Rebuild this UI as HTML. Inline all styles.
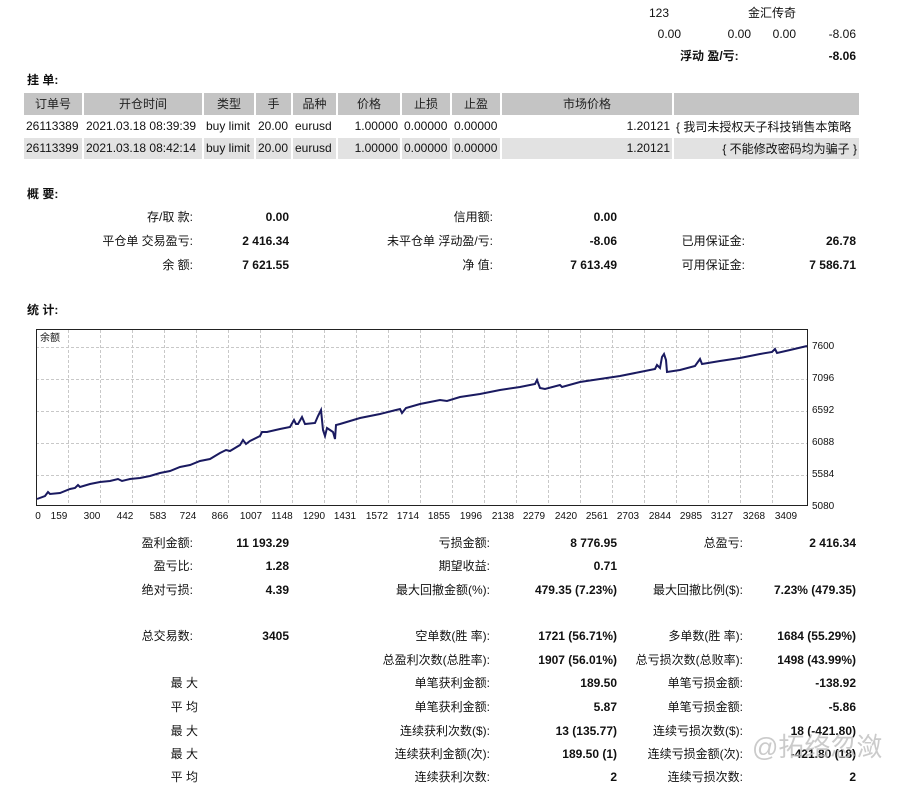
<!DOCTYPE html>
<html><head><meta charset="utf-8"><style>
body{margin:0;width:917px;height:795px;background:#fff;font-family:"Liberation Sans","Noto Sans CJK SC",sans-serif;font-size:12px;color:#111;position:relative;overflow:hidden}
.a{position:absolute;white-space:nowrap;line-height:14px}
.b{font-weight:bold}
table{position:absolute;left:24px;top:93px;border-collapse:collapse;font-size:12px;table-layout:fixed;width:835px}
td{height:22px;padding:0 2px;white-space:nowrap;overflow:hidden;border-right:2px solid #fff;border-bottom:1px solid #fff;box-sizing:border-box}
tr.h td{background:#c4c4c4;text-align:center;color:#222}
tr.g td{background:#e2e2e2}
.rt{text-align:right}
</style></head><body>
<div class="a" style="right:248px;top:6px">123</div>
<div class="a" style="left:748px;top:6px">金汇传奇</div>
<div class="a" style="right:236px;top:27px">0.00</div>
<div class="a" style="right:166px;top:27px">0.00</div>
<div class="a" style="right:121px;top:27px">0.00</div>
<div class="a" style="right:61px;top:27px">-8.06</div>
<div class="a b" style="left:680px;top:49px">浮动 盈/亏:</div>
<div class="a b" style="right:61px;top:49px">-8.06</div>

<div class="a b" style="left:27px;top:73px">挂 单:</div>
<table>
<colgroup><col style="width:59px"><col style="width:120px"><col style="width:52px"><col style="width:37px"><col style="width:45px"><col style="width:64px"><col style="width:50px"><col style="width:50px"><col style="width:172px"><col style="width:186px"></colgroup>
<tr class="h"><td>订单号</td><td>开仓时间</td><td>类型</td><td>手</td><td>品种</td><td>价格</td><td>止损</td><td>止盈</td><td>市场价格</td><td style="border-right:0"></td></tr>
<tr><td>26113389</td><td>2021.03.18 08:39:39</td><td>buy limit</td><td>20.00</td><td>eurusd</td><td class="rt">1.00000</td><td>0.00000</td><td>0.00000</td><td class="rt">1.20121</td><td style="border-right:0">{ 我司未授权天子科技销售本策略</td></tr>
<tr class="g"><td>26113399</td><td>2021.03.18 08:42:14</td><td>buy limit</td><td>20.00</td><td>eurusd</td><td class="rt">1.00000</td><td>0.00000</td><td>0.00000</td><td class="rt">1.20121</td><td class="rt" style="border-right:0">{ 不能修改密码均为骗子 }</td></tr>
</table>

<div class="a b" style="left:27px;top:187px">概 要:</div>
<div class="a" style="right:724px;top:210px">存/取 款:</div><div class="a b" style="right:628px;top:210px">0.00</div>
<div class="a" style="right:424px;top:210px">信用额:</div><div class="a b" style="right:300px;top:210px">0.00</div>
<div class="a" style="right:724px;top:234px">平仓单 交易盈亏:</div><div class="a b" style="right:628px;top:234px">2 416.34</div>
<div class="a" style="right:424px;top:234px">未平仓单 浮动盈/亏:</div><div class="a b" style="right:300px;top:234px">-8.06</div>
<div class="a" style="right:172px;top:234px">已用保证金:</div><div class="a b" style="right:61px;top:234px">26.78</div>
<div class="a" style="right:724px;top:258px">余 额:</div><div class="a b" style="right:628px;top:258px">7 621.55</div>
<div class="a" style="right:424px;top:258px">净 值:</div><div class="a b" style="right:300px;top:258px">7 613.49</div>
<div class="a" style="right:172px;top:258px">可用保证金:</div><div class="a b" style="right:61px;top:258px">7 586.71</div>

<div class="a b" style="left:27px;top:303px">统 计:</div>

<svg style="position:absolute;left:0;top:0" width="917" height="795">
<g stroke="#c8c8c8" stroke-dasharray="3,2" stroke-width="1">
<line x1="36" y1="347.5" x2="807" y2="347.5"/><line x1="36" y1="379.5" x2="807" y2="379.5"/><line x1="36" y1="411.5" x2="807" y2="411.5"/><line x1="36" y1="443.5" x2="807" y2="443.5"/><line x1="36" y1="475.5" x2="807" y2="475.5"/>
<line x1="68.5" y1="330" x2="68.5" y2="505"/><line x1="100.5" y1="330" x2="100.5" y2="505"/><line x1="132.5" y1="330" x2="132.5" y2="505"/><line x1="164.5" y1="330" x2="164.5" y2="505"/><line x1="196.5" y1="330" x2="196.5" y2="505"/><line x1="228.5" y1="330" x2="228.5" y2="505"/><line x1="260.5" y1="330" x2="260.5" y2="505"/><line x1="292.5" y1="330" x2="292.5" y2="505"/><line x1="324.5" y1="330" x2="324.5" y2="505"/><line x1="356.5" y1="330" x2="356.5" y2="505"/><line x1="388.5" y1="330" x2="388.5" y2="505"/><line x1="420.5" y1="330" x2="420.5" y2="505"/><line x1="452.5" y1="330" x2="452.5" y2="505"/><line x1="484.5" y1="330" x2="484.5" y2="505"/><line x1="516.5" y1="330" x2="516.5" y2="505"/><line x1="548.5" y1="330" x2="548.5" y2="505"/><line x1="580.5" y1="330" x2="580.5" y2="505"/><line x1="612.5" y1="330" x2="612.5" y2="505"/><line x1="644.5" y1="330" x2="644.5" y2="505"/><line x1="676.5" y1="330" x2="676.5" y2="505"/><line x1="708.5" y1="330" x2="708.5" y2="505"/><line x1="740.5" y1="330" x2="740.5" y2="505"/><line x1="772.5" y1="330" x2="772.5" y2="505"/>
</g>
<rect x="36.5" y="329.5" width="771" height="176" fill="none" stroke="#222" stroke-width="1"/>
<polyline fill="none" stroke="#1a1a60" stroke-width="2" points="37,499 45,496 48,492 50,494 60,493 70,489 75,488 78,485 80,487 90,484 100,482 110,481 118,479 122,481 130,479 140,478 150,476 160,473 170,471 180,467 190,465 200,461 210,459 220,453 226,450 230,451 240,445 243,440 246,444 250,441 260,436 262,432 267,432 280,429 290,427 294,420 296,424 298,424 302,417 305,424 315,423 318,416 321,410 323,430 325,436 327,428 330,430 333,432 335,439 336,425 340,424 360,418 380,414 396,410 400,409 402,413 406,408 420,404 440,400 447,401 460,397 480,394 500,390 520,387 535,384 537,380 540,388 545,389 560,385 562,387 580,382 600,379 620,376 640,372 655,369 657,365 660,368 662,357 664,354 666,360 667,372 680,370 695,366 700,359 702,364 720,361 740,358 760,354 772,352 775,349 777,353 790,350 807,346"/>
<g font-family="Liberation Sans,sans-serif" font-size="10" fill="#111">
<text x="40" y="341">余额</text>
<text x="812" y="349">7600</text><text x="812" y="381">7096</text><text x="812" y="413">6592</text><text x="812" y="445">6088</text><text x="812" y="477">5584</text><text x="812" y="509">5080</text>
<g text-anchor="middle">
<text x="38" y="519">0</text><text x="59" y="519">159</text><text x="92" y="519">300</text><text x="125" y="519">442</text><text x="158" y="519">583</text><text x="188" y="519">724</text><text x="220" y="519">866</text><text x="251" y="519">1007</text><text x="282" y="519">1148</text><text x="314" y="519">1290</text><text x="345" y="519">1431</text><text x="377" y="519">1572</text><text x="408" y="519">1714</text><text x="439" y="519">1855</text><text x="471" y="519">1996</text><text x="503" y="519">2138</text><text x="534" y="519">2279</text><text x="566" y="519">2420</text><text x="597" y="519">2561</text><text x="628" y="519">2703</text><text x="660" y="519">2844</text><text x="691" y="519">2985</text><text x="722" y="519">3127</text><text x="754" y="519">3268</text><text x="786" y="519">3409</text>
</g></g>
</svg>

<div class="a" style="right:724px;top:536px">盈利金额:</div><div class="a b" style="right:628px;top:536px">11 193.29</div>
<div class="a" style="right:427px;top:536px">亏损金额:</div><div class="a b" style="right:300px;top:536px">8 776.95</div>
<div class="a" style="right:174px;top:536px">总盈亏:</div><div class="a b" style="right:61px;top:536px">2 416.34</div>
<div class="a" style="right:724px;top:559px">盈亏比:</div><div class="a b" style="right:628px;top:559px">1.28</div>
<div class="a" style="right:427px;top:559px">期望收益:</div><div class="a b" style="right:300px;top:559px">0.71</div>
<div class="a" style="right:724px;top:583px">绝对亏损:</div><div class="a b" style="right:628px;top:583px">4.39</div>
<div class="a" style="right:427px;top:583px">最大回撤金额(%):</div><div class="a b" style="right:300px;top:583px">479.35 (7.23%)</div>
<div class="a" style="right:174px;top:583px">最大回撤比例($):</div><div class="a b" style="right:61px;top:583px">7.23% (479.35)</div>
<div class="a" style="right:724px;top:629px">总交易数:</div><div class="a b" style="right:628px;top:629px">3405</div>
<div class="a" style="right:427px;top:629px">空单数(胜 率):</div><div class="a b" style="right:300px;top:629px">1721 (56.71%)</div>
<div class="a" style="right:174px;top:629px">多单数(胜 率):</div><div class="a b" style="right:61px;top:629px">1684 (55.29%)</div>
<div class="a" style="right:427px;top:653px">总盈利次数(总胜率):</div><div class="a b" style="right:300px;top:653px">1907 (56.01%)</div>
<div class="a" style="right:174px;top:653px">总亏损次数(总败率):</div><div class="a b" style="right:61px;top:653px">1498 (43.99%)</div>
<div class="a" style="right:719px;top:676px">最 大</div>
<div class="a" style="right:427px;top:676px">单笔获利金额:</div><div class="a b" style="right:300px;top:676px">189.50</div>
<div class="a" style="right:174px;top:676px">单笔亏损金额:</div><div class="a b" style="right:61px;top:676px">-138.92</div>
<div class="a" style="right:719px;top:700px">平 均</div>
<div class="a" style="right:427px;top:700px">单笔获利金额:</div><div class="a b" style="right:300px;top:700px">5.87</div>
<div class="a" style="right:174px;top:700px">单笔亏损金额:</div><div class="a b" style="right:61px;top:700px">-5.86</div>
<div class="a" style="right:719px;top:724px">最 大</div>
<div class="a" style="right:427px;top:724px">连续获利次数($):</div><div class="a b" style="right:300px;top:724px">13 (135.77)</div>
<div class="a" style="right:174px;top:724px">连续亏损次数($):</div><div class="a b" style="right:61px;top:724px">18 (-421.80)</div>
<div class="a" style="right:719px;top:747px">最 大</div>
<div class="a" style="right:427px;top:747px">连续获利金额(次):</div><div class="a b" style="right:300px;top:747px">189.50 (1)</div>
<div class="a" style="right:174px;top:747px">连续亏损金额(次):</div><div class="a b" style="right:61px;top:747px">-421.80 (18)</div>
<div class="a" style="right:719px;top:770px">平 均</div>
<div class="a" style="right:427px;top:770px">连续获利次数:</div><div class="a b" style="right:300px;top:770px">2</div>
<div class="a" style="right:174px;top:770px">连续亏损次数:</div><div class="a b" style="right:61px;top:770px">2</div>
<div class="a" style="left:752px;top:732px;font-size:26px;line-height:30px;color:rgba(190,190,190,0.8)">@拓络忽潋</div>
</body></html>
